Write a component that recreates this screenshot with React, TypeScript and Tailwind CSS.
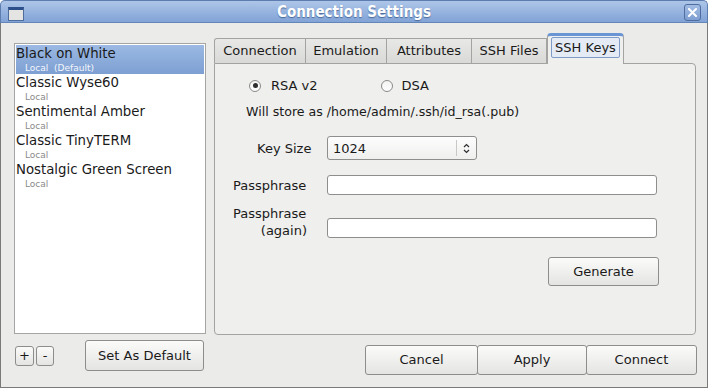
import React from "react";

const profiles = [
  { name: "Black on White", sub: "Local  (Default)" },
  { name: "Classic Wyse60", sub: "Local" },
  { name: "Sentimental Amber", sub: "Local" },
  { name: "Classic TinyTERM", sub: "Local" },
  { name: "Nostalgic Green Screen", sub: "Local" },
];

const tabs = [
  { label: "Connection", w: "w-[92px]" },
  { label: "Emulation", w: "w-[81px]" },
  { label: "Attributes", w: "w-[85px]" },
  { label: "SSH Files", w: "w-[75px]" },
];

const btn =
  "flex items-center justify-center border border-[#8d8d8b] rounded-[3px] bg-gradient-to-b from-[#fbfbfa] to-[#e4e4e2] text-[13px] text-[#1a1a1a]";

const Radio = ({ checked }: { checked?: boolean }) => (
  <span className="w-[12px] h-[12px] rounded-full border border-[#8a8a88] bg-gradient-to-b from-[#f4f4f3] to-[#fdfdfd] flex items-center justify-center">
    {checked && <span className="w-[5px] h-[5px] rounded-full bg-[#2e2e2e]" />}
  </span>
);

export default function App() {
  return (
    <div
      className="w-[708px] h-[388px] flex flex-col text-[13px] text-[#1a1a1a] overflow-hidden"
      style={{ fontFamily: '"DejaVu Sans", Verdana, sans-serif' }}
    >
      {/* title bar */}
      <div className="h-[23px] relative flex items-center justify-center rounded-t-[5px] border border-b-[#6485b8] border-[#5d7db0] bg-gradient-to-b from-[#adc5e8] to-[#82a3d6]">
        <div className="absolute left-[7px] top-[6px] w-[16px] h-[14px] border border-[#4f6d9c] bg-[#e4e4e2] border-t-[3px] border-t-[#2c4f8c]" />
        <span
          className="text-white font-bold text-[15px] leading-[18px]"
          style={{ fontFamily: '"DejaVu Sans Condensed", "DejaVu Sans", sans-serif', fontStretch: "condensed", textShadow: "0 1px 1px #4a6a9a" }}
        >
          Connection Settings
        </span>
        <div className="absolute right-[6px] top-[3px] w-[17px] h-[17px] rounded-[3px] border border-[#4f6e9f] bg-gradient-to-b from-[#a2bce3] to-[#7f9fd2] flex items-center justify-center">
          <svg width="9" height="9" viewBox="0 0 9 9">
            <path d="M1 1 L8 8 M8 1 L1 8" stroke="#fff" strokeWidth="2" strokeLinecap="square" />
          </svg>
        </div>
      </div>

      {/* body */}
      <div className="flex-1 flex bg-[#ebebe9] border-x border-b border-[#7a7a78]">
        {/* left column */}
        <div className="ml-[13px] w-[192px] flex flex-col">
          <div className="mt-[20px] h-[291px] bg-white border border-[#a5a5a3] p-px">
            {profiles.map((p, i) => (
              <div
                key={p.name}
                className={
                  "h-[29px] flex flex-col " +
                  (i === 0 ? "bg-gradient-to-b from-[#9bb9e3] to-[#7d9fd2]" : "")
                }
              >
                <span className="text-[13.3px] leading-[15px] mt-[1px]">{p.name}</span>
                <span
                  className={
                    "text-[9px] leading-[12px] mt-px pl-[9px] whitespace-pre " +
                    (i === 0 ? "text-[#f4f7fc]" : "text-[#8a8a8a]")
                  }
                >
                  {p.sub}
                </span>
              </div>
            ))}
          </div>
          <div className="mt-[6px] flex items-center">
            <div className={btn + " ml-px w-[19px] h-[20px] border-[#6d8fc4] leading-none"}>+</div>
            <div className={btn + " ml-[2px] w-[18px] h-[20px] leading-none"}>-</div>
            <div className={btn + " ml-[31px] w-[119px] h-[31px]"}>Set As Default</div>
          </div>
        </div>

        {/* right column */}
        <div className="ml-[8px] w-[484px] flex flex-col">
          <div className="mt-[10px] h-[30px] flex items-end">
            {tabs.map((t, i) => (
              <div
                key={t.label}
                className={
                  t.w +
                  " h-[25px] flex items-center justify-center border-t border-[#a3a3a1] bg-gradient-to-b from-[#e8e8e6] to-[#d9d9d7] " +
                  (i === 0 ? "border-l rounded-tl-[3px] " : "") +
                  "border-r"
                }
              >
                {t.label}
              </div>
            ))}
            <div className="w-[77px] h-[31px] relative z-10 -mb-px flex items-start justify-center bg-[#efefed] border-x border-t-[3px] border-[#a3a3a1] border-t-[#6a95d4] rounded-t-[4px]">
              <span className="mt-[1px] px-[3px] h-[21px] flex items-center rounded-[2px] border border-[#7d9cc9] bg-[#e4ebf4]">
                SSH Keys
              </span>
            </div>
          </div>

          <div className="w-[482px] h-[272px] bg-[#efefed] border border-[#a3a3a1] rounded-b-[4px] rounded-tr-[4px] flex flex-col">
            <div className="mt-[12px] flex items-center">
              <span className="ml-[34px]"><Radio checked /></span>
              <span className="ml-[10px]">RSA v2</span>
              <span className="ml-[63px]"><Radio /></span>
              <span className="ml-[9px]">DSA</span>
            </div>
            <div className="mt-[7px] ml-[31px] text-[12.6px]">Will store as /home/admin/.ssh/id_rsa(.pub)</div>
            <div className="mt-[15px] flex items-center">
              <span className="ml-[42px] w-[70px]">Key Size</span>
              <div className="w-[150px] h-[24px] rounded-[3px] border border-[#8e8e8c] bg-gradient-to-b from-[#fdfdfd] to-[#efefee] flex items-center">
                <span className="flex-1 pl-[5px]">1024</span>
                <span className="w-px h-[16px] bg-[#c8c8c6]" />
                <svg className="mx-[6px]" width="7" height="11" viewBox="0 0 7 11">
                  <path d="M1 4 L3.5 1.5 L6 4 M1 7 L3.5 9.5 L6 7" fill="none" stroke="#2e2e2e" strokeWidth="1.2" />
                </svg>
              </div>
            </div>
            <div className="mt-[15px] flex items-center">
              <span className="ml-[18px] w-[94px]">Passphrase</span>
              <div className="w-[330px] h-[20px] rounded-[3px] border border-[#8e8e8c] bg-white" />
            </div>
            <div className="mt-[10px] flex items-end">
              <div className="ml-[18px] w-[74px] flex flex-col items-end leading-[17px]">
                <span className="self-start">Passphrase</span>
                <span>(again)</span>
              </div>
              <div className="ml-[20px] mb-px w-[330px] h-[20px] rounded-[3px] border border-[#8e8e8c] bg-white" />
            </div>
            <div className="mt-[18px] flex justify-end pr-[36px]">
              <div className={btn + " w-[111px] h-[29px]"}>Generate</div>
            </div>
          </div>

          <div className="mt-[10px] flex pl-[151px]">
            <div className={btn + " w-[113px] h-[30px]"}>Cancel</div>
            <div className={btn + " w-[110px] h-[30px] -ml-px"}>Apply</div>
            <div className={btn + " w-[111px] h-[30px] -ml-px"}>Connect</div>
          </div>
        </div>
      </div>
    </div>
  );
}
